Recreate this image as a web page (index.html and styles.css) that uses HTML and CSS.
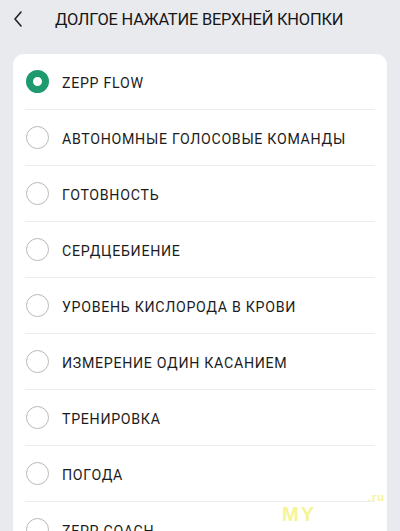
FILE: index.html
```html
<!DOCTYPE html>
<html lang="ru">
<head>
  <meta charset="UTF-8">
  <title>Долгое нажатие верхней кнопки</title>
  <meta name="viewport" content="width=device-width, initial-scale=1.0">
  <link rel="stylesheet" href="styles.css">
</head>
<body>

  <div class="header">
    <svg class="back" width="12" height="18" viewBox="0 0 12 18">
      <path d="M9 2 L3 9 L9 16" fill="none" stroke="#222" stroke-width="1.6" stroke-linecap="round" stroke-linejoin="round"/>
    </svg>
    <h1>ДОЛГОЕ НАЖАТИЕ ВЕРХНЕЙ КНОПКИ</h1>
  </div>

  <div class="card">
    <div class="row"><span class="radio checked"></span><span class="label">ZEPP FLOW</span></div>
    <div class="row"><span class="radio"></span><span class="label">АВТОНОМНЫЕ ГОЛОСОВЫЕ КОМАНДЫ</span></div>
    <div class="row"><span class="radio"></span><span class="label">ГОТОВНОСТЬ</span></div>
    <div class="row"><span class="radio"></span><span class="label">СЕРДЦЕБИЕНИЕ</span></div>
    <div class="row"><span class="radio"></span><span class="label">УРОВЕНЬ КИСЛОРОДА В КРОВИ</span></div>
    <div class="row"><span class="radio"></span><span class="label">ИЗМЕРЕНИЕ ОДИН КАСАНИЕМ</span></div>
    <div class="row"><span class="radio"></span><span class="label">ТРЕНИРОВКА</span></div>
    <div class="row"><span class="radio"></span><span class="label">ПОГОДА</span></div>
    <div class="row"><span class="radio"></span><span class="label">ZEPP COACH</span></div>
  </div>

  <div class="watermark">MY</div>
  <div class="watermark small">.ru</div>

</body>
</html>
```

FILE: styles.css
```css
:root {
  --bg: #e9eaee;
  --card: #ffffff;
  --text: #1c1c1c;
  --line: #ececee;
  --green: #1d9b6f;
}

body {
  margin: 0;
  background: var(--bg);
  font-family: Roboto, "Noto Sans", sans-serif;
  color: var(--text);
  overflow: hidden;
  height: 531px;
  position: relative;
}

.header {
  display: flex;
  align-items: center;
  height: 38px;
  padding-left: 12px;
}

.back {
  flex: none;
}

h1 {
  margin: 0 0 0 31px;
  font-size: 16.4px;
  font-weight: 400;
  letter-spacing: -0.2px;
  color: #161616;
}

.card {
  margin: 16px 13px 0;
  background: var(--card);
  border-radius: 11px;
  padding: 0 12px;
}

.row {
  display: flex;
  align-items: center;
  height: 55px;
  border-bottom: 1px solid var(--line);
}

.radio {
  flex: none;
  box-sizing: border-box;
  width: 23px;
  height: 23px;
  margin-left: 1px;
  border-radius: 50%;
  border: 1.5px solid #b9b9bc;
}

.radio.checked {
  border: 7.5px solid var(--green);
}

.label {
  margin-left: 13px;
  font-size: 14.2px;
  letter-spacing: 0.7px;
  padding-top: 2px;
}

.watermark {
  position: absolute;
  left: 282px;
  top: 503px;
  font-family: "Liberation Sans", sans-serif;
  font-weight: bold;
  font-size: 20px;
  color: #f5f27a;
  opacity: 0.8;
  letter-spacing: 2px;
}

.watermark.small {
  left: 368px;
  top: 491px;
  font-size: 11px;
  letter-spacing: 1px;
}
```
